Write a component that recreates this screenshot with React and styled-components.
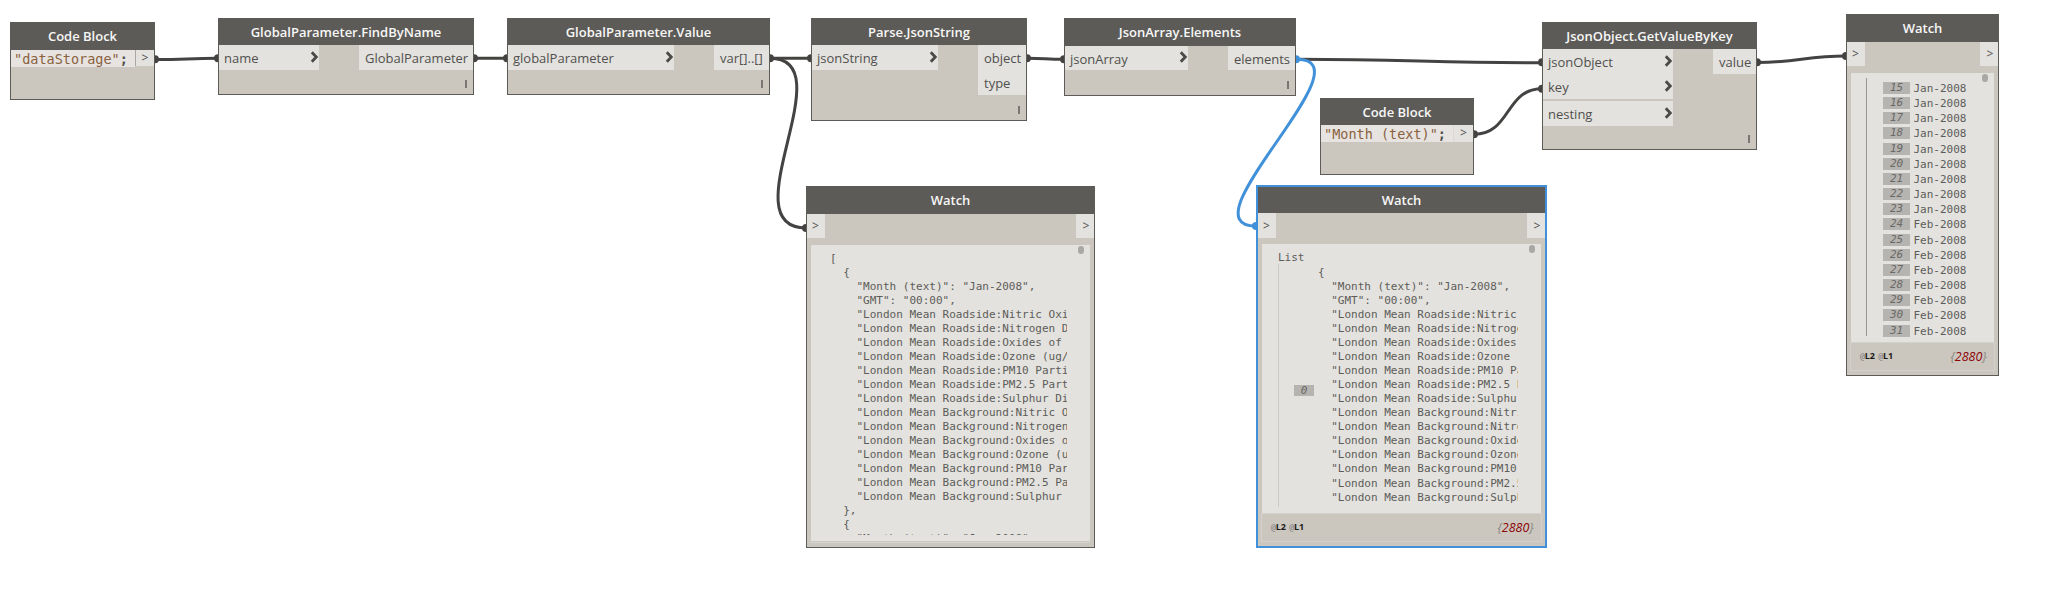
import React from "react";
import styled, { createGlobalStyle } from "styled-components";

const GlobalStyle = createGlobalStyle`
  body { margin: 0; background: #fff; }
  * { box-sizing: border-box; }
`;

const c = {
  header: "#5d5b58",
  body: "#cbc6be",
  port: "#e3e2de",
  wire: "#444342",
  blue: "#4091da",
  text: "#51504e",
  mono: "#5d5c59",
};
const sans = `"Open Sans", "Noto Sans", sans-serif`;
const mono = `"DejaVu Sans Mono", "Liberation Mono", monospace`;

const Canvas = styled.main`
  position: relative;
  width: 2060px;
  height: 590px;
  overflow: hidden;
  background: #fff;
  font-family: ${sans};
`;

const Wires = styled.svg`
  position: absolute;
  inset: 0;
`;

const NodeBox = styled.section`
  position: absolute;
  left: ${(p) => p.$x}px;
  top: ${(p) => p.$y}px;
  width: ${(p) => p.$w}px;
  height: ${(p) => p.$h}px;
  display: flex;
  flex-direction: column;
  background: ${c.body};
  border: ${(p) => (p.$selected ? `2px solid ${c.blue}` : `1px solid ${c.header}`)};
`;

const Header = styled.header`
  flex: none;
  height: ${(p) => p.$h}px;
  display: flex;
  align-items: center;
  justify-content: center;
  padding-bottom: 1px;
  background: ${c.header};
  color: #f7f7f6;
  font-size: 13px;
  font-weight: 600;
  line-height: 18px;
  white-space: nowrap;
`;

const Ports = styled.div`
  flex: none;
  display: flex;
  justify-content: space-between;
  align-items: flex-start;
`;

const PortColumn = styled.div`
  display: flex;
  flex-direction: column;
  width: ${(p) => p.$w}px;
`;

const Port = styled.div`
  display: flex;
  align-items: center;
  justify-content: space-between;
  height: ${(p) => p.$h || 25}px;
  margin-top: ${(p) => p.$gap || 0}px;
  padding: 1px 0 0 ${(p) => p.$pad ?? 6}px;
  background: ${c.port};
  color: ${c.text};
  font-size: 13px;
  line-height: 18px;
  white-space: nowrap;
`;

const Chevron = styled.svg`
  flex: none;
  margin-top: -3px;
`;

const Lacing = styled.i`
  width: 2px;
  height: 8px;
  margin: auto 6px 6px auto;
  background: #7a7773;
`;

const CodeRow = styled.div`
  display: flex;
  align-items: flex-start;
  height: 17px;
`;

const CodeText = styled.code`
  flex: 1;
  height: 17px;
  padding-left: 3px;
  background: #e6e3e0;
  color: #8a613e;
  font: 13.5px/19px ${mono};
  white-space: pre;
  b { font-weight: 700; color: #51504e; }
`;

const CodePort = styled.div`
  width: ${(p) => p.$w}px;
  height: ${(p) => p.$h}px;
  border-left: 1px solid ${(p) => p.$line};
  background: #e3e2df;
  color: ${c.text};
  font-size: 12px;
  line-height: 16px;
  text-align: center;
`;

const WatchPort = styled.div`
  width: 18px;
  height: ${(p) => p.$h}px;
  padding-right: ${(p) => (p.$out ? 0 : 1)}px;
  padding-left: ${(p) => (p.$out ? 2 : 0)}px;
  background: ${c.port};
  color: ${c.text};
  font-size: 12px;
  line-height: ${(p) => p.$h}px;
  text-align: center;
`;

const Viewer = styled.div`
  flex: none;
  display: flex;
  position: relative;
  height: ${(p) => p.$h}px;
  margin: ${(p) => p.$top}px 4px 0;
  padding: ${(p) => p.$pad};
  background: ${c.port};
`;

const Thumb = styled.i`
  position: absolute;
  top: 1px;
  right: ${(p) => p.$right}px;
  width: 6px;
  height: 8px;
  border-radius: 3px;
  background: #a9a8a5;
`;

const Json = styled.pre`
  width: ${(p) => p.$w}px;
  height: ${(p) => p.$h}px;
  margin: 0 0 0 ${(p) => p.$left || 0}px;
  padding-top: ${(p) => p.$top || 0}px;
  overflow: hidden;
  color: ${c.mono};
  font: 11px/${(p) => p.$line}px ${mono};
`;

const Tree = styled.div`
  display: flex;
  flex-direction: column;
  width: 100%;
`;

const TreeRoot = styled.div`
  height: 13px;
  color: ${c.mono};
  font: 11px/14px ${mono};
`;

const Branch = styled.div`
  display: flex;
  align-items: flex-start;
  height: ${(p) => p.$h}px;
  border-left: 1px solid ${(p) => p.$color};
  padding-left: ${(p) => p.$pad}px;
`;

const Badge = styled.span`
  flex: none;
  width: ${(p) => p.$w || 27}px;
  height: ${(p) => p.$h || 12}px;
  margin-top: ${(p) => p.$top || 0}px;
  background: #b6b4b0;
  color: #6a6966;
  font: italic 11px/12px ${mono};
  text-align: center;
`;

const List = styled.div`
  display: flex;
  flex-direction: column;
  padding-top: 4px;
`;

const Item = styled.div`
  display: flex;
  gap: 3.5px;
  height: 15.17px;
  color: ${c.mono};
  font: 11px/13px ${mono};
`;

const Footer = styled.footer`
  flex: none;
  display: flex;
  align-items: center;
  justify-content: space-between;
  height: 29px;
  margin: 0 3px;
  padding: 0 7px 0 9px;
  border: 1px solid #d3d1cd;
`;

const FooterLine = styled.div`
  height: 2px;
  margin: 0 4px 0 3px;
  border-bottom: 1px solid #d6d6d5;
`;

const Levels = styled.span`
  color: #77757a;
  font: 8px/12px "DejaVu Sans Mono", monospace;
  letter-spacing: -0.1px;
  word-spacing: -1.3px;
  white-space: pre;
  b { font-family: ${sans}; font-size: 9px; color: #1c1b1a; }
`;

const Count = styled.span`
  margin-bottom: 2px;
  transform: scaleX(0.96);
  transform-origin: right;
  color: #8a8885;
  font: italic 13px/18px ${sans};
  b { font-weight: 500; color: #8b0508; }
`;

function Arrow() {
  return (
    <Chevron width="9" height="12" viewBox="0 0 9 12">
      <path d="M1.8 1.2 L6.3 6 L1.8 10.8" fill="none" stroke="#4b4a48" strokeWidth="2.8" />
    </Chevron>
  );
}

function FunctionNode({ x, y, w, h, head = 26, title, inputs, inW, outputs, outW, firstH = 25 }) {
  return (
    <NodeBox $x={x} $y={y} $w={w} $h={h}>
      <Header $h={head}>{title}</Header>
      <Ports>
        <PortColumn $w={inW}>
          {inputs.map((p) => (
            <Port key={p.name} $gap={p.gap} $pad={5} $h={firstH}>{p.name}<Arrow /></Port>
          ))}
        </PortColumn>
        <PortColumn $w={outW}>
          {outputs.map((name) => <Port key={name} $h={firstH}>{name}</Port>)}
        </PortColumn>
      </Ports>
      <Lacing />
    </NodeBox>
  );
}

function CodeBlock({ x, y, w, h, head, value, portW, portH, line }) {
  return (
    <NodeBox $x={x} $y={y} $w={w} $h={h}>
      <Header $h={head}>Code Block</Header>
      <CodeRow>
        <CodeText>{`"${value}"`}<b>;</b></CodeText>
        <CodePort $w={portW} $h={portH} $line={line}>&gt;</CodePort>
      </CodeRow>
    </NodeBox>
  );
}

function WatchNode({ x, y, w, h, head, portH, selected, children }) {
  return (
    <NodeBox $x={x} $y={y} $w={w} $h={h} $selected={selected}>
      <Header $h={head}>Watch</Header>
      <Ports>
        <WatchPort $h={portH}>&gt;</WatchPort>
        <WatchPort $h={portH} $out>&gt;</WatchPort>
      </Ports>
      {children}
    </NodeBox>
  );
}

function ListFooter() {
  return (
    <Footer>
      <Levels>@<b>L2</b> @<b>L1</b></Levels>
      <Count>{"{"}<b>2880</b>{"}"}</Count>
    </Footer>
  );
}

const pollutants = [
  "Nitric Oxide (ug/m3)", "Nitrogen Dioxide (ug/m3)", "Oxides of Nitrogen (ug/m3)", "Ozone (ug/m3)",
  "PM10 Particulate (ug/m3)", "PM2.5 Particulate (ug/m3)", "Sulphur Dioxide (ug/m3)",
];
const record = [
  "{",
  `  "Month (text)": "Jan-2008",`,
  `  "GMT": "00:00",`,
  ...["Roadside", "Background"].flatMap((site) => pollutants.map((p) => `  "London Mean ${site}:${p}": "",`)),
  "},",
];
const fullJson = ["[", ...record.map((l) => "  " + l), "  {", `    "Month (text)": "Jan-2008",`].join("\n");
const firstRecord = record.join("\n");

const wires = [
  { d: "M156 59.5 C184 59.5 190 58.3 218 58.3" },
  { d: "M474 58.3 H507" },
  { d: "M770 58.3 H811" },
  { d: "M770 58.3 C846 58.3 728 228 806 228" },
  { d: "M1027 58.3 C1044 58.3 1046 59.3 1064 59.3" },
  { d: "M1297 59.3 C1405 59.3 1434 62.7 1542 62.7" },
  { d: "M1474 134.3 C1511 134.3 1505 88.7 1542 88.7" },
  { d: "M1757 62.5 C1796 62.5 1807 56 1846 56" },
  { d: "M1297 59.3 C1371 59.3 1181 226 1256 226", blue: true },
];
const dots = [
  [155, 59.3], [218, 58.3], [474, 58.3], [507, 58.3], [770, 58.3], [811, 58.3], [1027, 58.3], [1064, 59.3],
  [1474, 134.3], [1542, 62.3], [1542, 88.7], [1757, 62.3], [1846, 56], [806, 228], [1296, 59.3, true], [1256, 226, true],
];

export default function App() {
  return (
    <Canvas>
      <GlobalStyle />
      <Wires width="2060" height="590">
        {wires.map((w) => (
          <path key={w.d} d={w.d} fill="none" stroke={w.blue ? c.blue : c.wire} strokeWidth="3" />
        ))}
        {dots.map(([x, y, blue]) => (
          <circle key={`${x}-${y}`} cx={x} cy={y} r="4" fill={blue ? c.blue : c.wire} />
        ))}
      </Wires>

      <CodeBlock x={10} y={22} w={145} h={78} head={27} value="dataStorage" portW={19} portH={16} line="#aaa8a4" />
      <FunctionNode x={218} y={18} w={256} h={77} title="GlobalParameter.FindByName"
        inputs={[{ name: "name" }]} inW={100} outputs={["GlobalParameter"]} outW={114} />
      <FunctionNode x={507} y={18} w={263} h={77} title="GlobalParameter.Value"
        inputs={[{ name: "globalParameter" }]} inW={166} outputs={["var[]..[]"]} outW={55} />
      <FunctionNode x={811} y={18} w={216} h={103} title="Parse.JsonString"
        inputs={[{ name: "jsonString" }]} inW={126} outputs={["object", "type"]} outW={48} />
      <FunctionNode x={1064} y={18} w={232} h={78} head={27} firstH={24} title="JsonArray.Elements"
        inputs={[{ name: "jsonArray" }]} inW={123} outputs={["elements"]} outW={67} />
      <CodeBlock x={1320} y={98} w={154} h={77} head={26} value="Month (text)" portW={20} portH={17} line="#dcd9d5" />
      <FunctionNode x={1542} y={22} w={215} h={128} title="JsonObject.GetValueByKey"
        inputs={[{ name: "jsonObject" }, { name: "key" }, { name: "nesting", gap: 2 }]} inW={130}
        outputs={["value"]} outW={43} />

      <WatchNode x={806} y={186} w={289} h={362} head={27} portH={24}>
        <Viewer $top={7} $h={296} $pad="7px 0 0 19px">
          <Json $w={237} $h={283} $line={14.02}>{fullJson}</Json>
          <Thumb $right={6} />
        </Viewer>
        <FooterLine />
      </WatchNode>

      <WatchNode x={1256} y={185} w={291} h={363} head={26} portH={25} selected>
        <Viewer $top={6} $h={269} $pad="7px 0 0 16px">
          <Tree>
            <TreeRoot>List</TreeRoot>
            <Branch $h={243} $color="#cccac6" $pad={15}>
              <Badge $w={20} $h={11} $top={121}>0</Badge>
              <Json $w={200} $h={243} $left={4} $top={1.8} $line={14.04}>{firstRecord}</Json>
            </Branch>
          </Tree>
          <Thumb $right={6} />
        </Viewer>
        <ListFooter />
      </WatchNode>

      <WatchNode x={1846} y={14} w={153} h={362} head={27} portH={24}>
        <Viewer $top={7} $h={269} $pad="5px 0 0 15px">
          <Branch $h={258} $color="#999793" $pad={16}>
            <List>
              {Array.from({ length: 17 }, (_, i) => (
                <Item key={i}>
                  <Badge>{15 + i}</Badge>
                  {i < 9 ? "Jan-2008" : "Feb-2008"}
                </Item>
              ))}
            </List>
          </Branch>
          <Thumb $right={6} />
        </Viewer>
        <ListFooter />
      </WatchNode>
    </Canvas>
  );
}
